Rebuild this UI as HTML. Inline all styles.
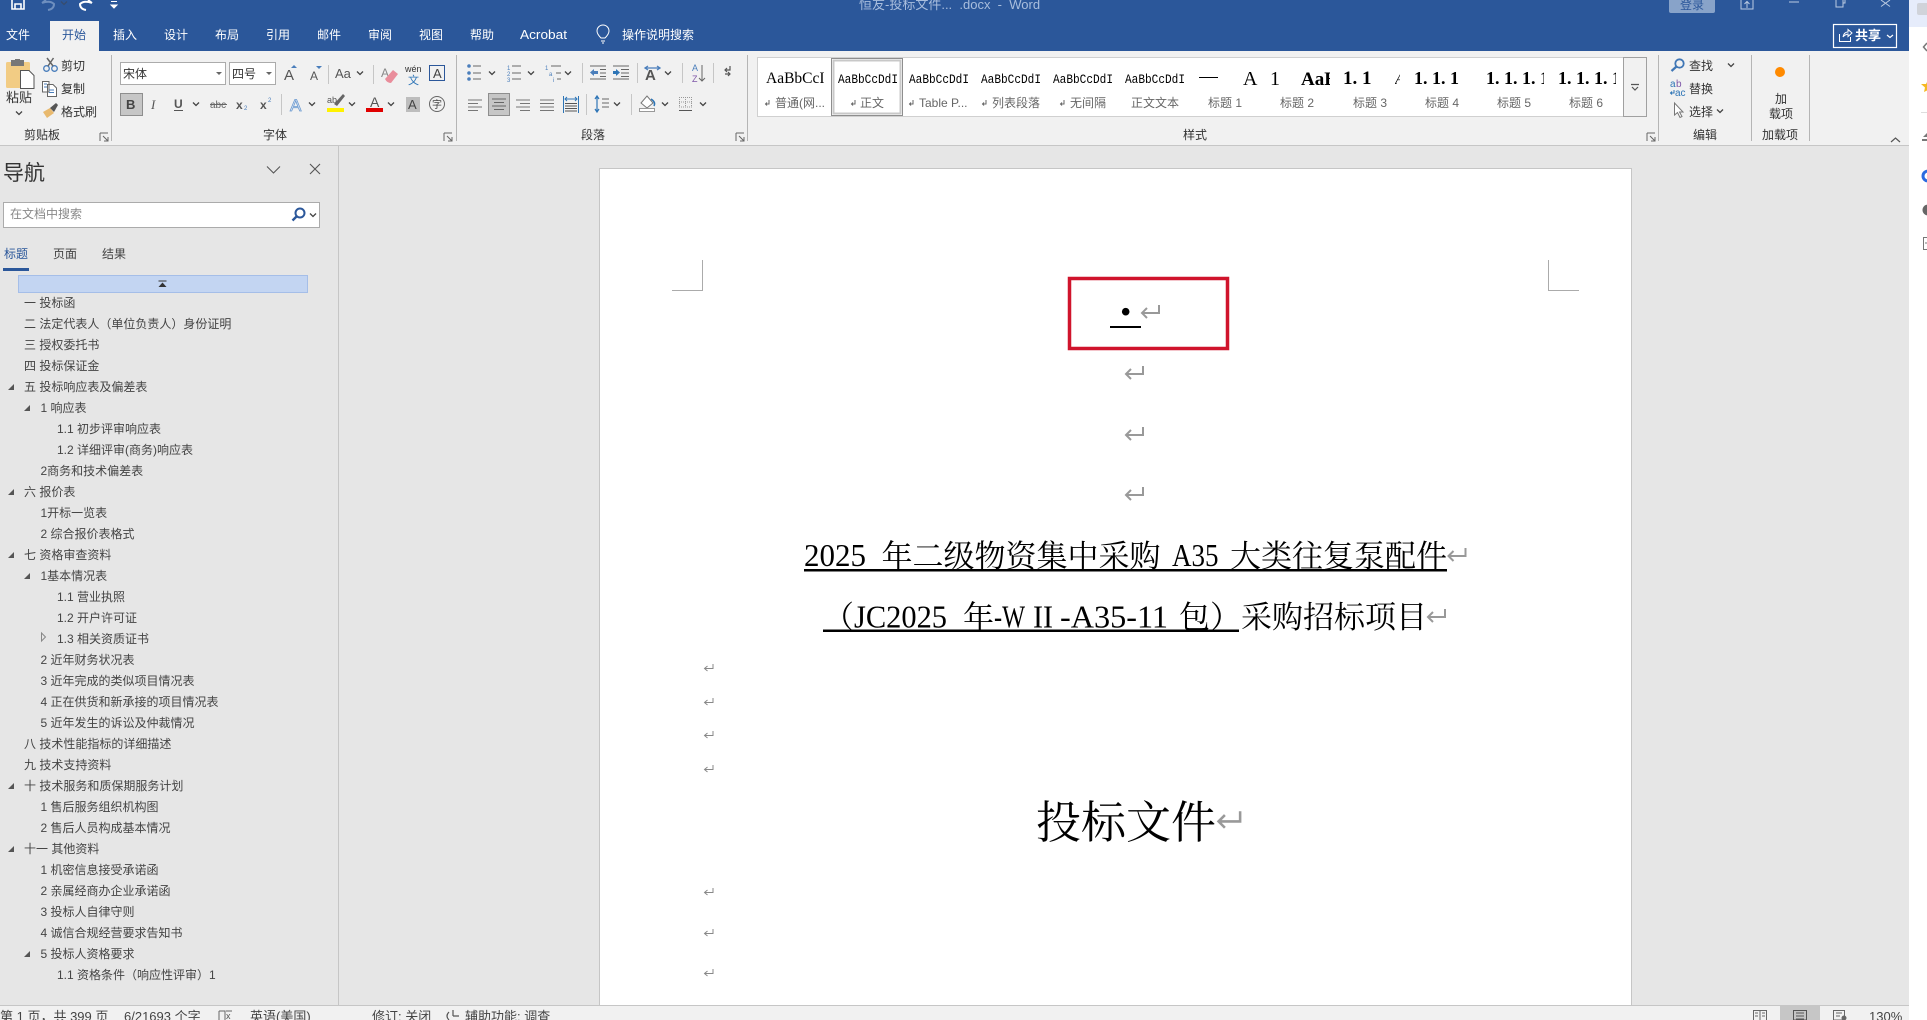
<!DOCTYPE html>
<html lang="zh"><head><meta charset="utf-8"><title>Word</title>
<style>
html,body{margin:0;padding:0;background:#fff;width:1927px;height:1020px;overflow:hidden}
svg{display:block}
text{font-family:"Liberation Sans","Noto Sans CJK SC",sans-serif;font-size:12px;fill:#333;white-space:pre}
.tab{fill:#fff}
.nav{fill:#444}
.lbl{fill:#666}
.ser{font-family:"Liberation Serif","Noto Serif CJK SC",serif;fill:#000}
.mono{font-family:"Liberation Mono",monospace;fill:#000;font-size:13px}
.cj{font-family:"Noto Serif CJK SC","Liberation Serif",serif;fill:#000}
.st{font-size:13px;fill:#444}
</style></head><body>
<svg width="1927" height="1020" viewBox="0 0 1927 1020" xmlns="http://www.w3.org/2000/svg">
<defs>
<path id="ch" d="M-3 -1.500L0 1.500L3 -1.500" fill="none" stroke="#444" stroke-width="1.300"/>
<path id="ln" d="M0 0H8M0 0V8M3 3L8 8M8 4V8H4" fill="none" stroke="#666" stroke-width="1"/>
<path id="ret" d="M19 1V9H2M7 4L2 9L7 14" fill="none" stroke="#999" stroke-width="2"/>
<path id="rets" d="M10 1V5.500H1.500M4.500 3L1.500 5.500L4.500 8" fill="none" stroke="#888" stroke-width="1"/>
<path id="tri" d="M6 0V6H0Z" fill="#555"/>
</defs>

<!-- backgrounds -->
<rect width="1927" height="1020" fill="#E6E6E6"/>
<rect width="1909" height="51" fill="#2B579A"/>
<rect y="51" width="1909" height="94" fill="#F1F1F1"/>
<rect y="145" width="1909" height="1" fill="#C6C6C6"/>
<rect x="338" y="146" width="1" height="859" fill="#C6C6C6"/>

<!-- quick access / title bar -->
<path d="M12 0V9H24V0M15 9V4H21V9" fill="none" stroke="#fff" stroke-width="1.600"/>
<path d="M42 3L46 0M42 3Q50 0 54 4Q54 9 48 10" fill="none" stroke="#6E8FBF" stroke-width="2"/>
<use href="#ch" x="64" y="3" style="opacity:.5"/>
<path d="M92 3L88 0M92 3Q84 0 80 4Q80 9 86 10" fill="none" stroke="#fff" stroke-width="2"/>
<path d="M111 1.500H117M111 5L114 8L117 5Z" fill="#fff" stroke="#fff" stroke-width="1"/>
<text x="859" y="9" style="font-size:13px;fill:#A9BEDD">恒友-投标文件...  .docx  -  Word</text>
<rect x="1669" y="-3" width="46" height="16" rx="2" fill="#88A3C9"/>
<text x="1680" y="9" style="fill:#2B579A;font-size:12px">登录</text>
<path d="M1741 0V9H1753V0M1747 8V2M1744.500 4L1747 1.500L1749.500 4" fill="none" stroke="#BBCBE2" stroke-width="1"/>
<path d="M1789 2H1799" stroke="#BBCBE2" stroke-width="1"/>
<path d="M1836 0V7H1843V0M1839 0V0M1843 3H1845V0" fill="none" stroke="#BBCBE2" stroke-width="1"/>
<path d="M1881 0L1890 6.500M1890 0L1881 6.500" stroke="#BBCBE2" stroke-width="1"/>

<!-- tabs -->
<rect x="50" y="21" width="49" height="30" fill="#F1F1F1"/>
<text class="tab" x="6" y="39">文件</text>
<text x="62" y="39" style="fill:#2B579A">开始</text>
<text class="tab" x="113" y="39">插入</text>
<text class="tab" x="164" y="39">设计</text>
<text class="tab" x="215" y="39">布局</text>
<text class="tab" x="266" y="39">引用</text>
<text class="tab" x="317" y="39">邮件</text>
<text class="tab" x="368" y="39">审阅</text>
<text class="tab" x="419" y="39">视图</text>
<text class="tab" x="470" y="39">帮助</text>
<text class="tab" x="520" y="39" textLength="47" lengthAdjust="spacingAndGlyphs" style="font-size:13px">Acrobat</text>
<path d="M601 38Q597 34 597 31A6 6 0 0 1 609 31Q609 34 605 38ZM601 41H605M602 43H604" fill="none" stroke="#fff" stroke-width="1"/>
<text class="tab" x="622" y="39">操作说明搜索</text>
<rect x="1833.500" y="24.500" width="63" height="23" fill="none" stroke="#fff" stroke-width="1.200"/>
<path d="M1839.500 34V41.500H1850.500V37M1843 37Q1844 32 1848 32V29.500L1852 33L1848 36.500V34Q1845 34.500 1843 37Z" fill="none" stroke="#fff" stroke-width="1"/>
<text x="1855" y="40" style="fill:#fff;font-size:13px;font-weight:bold">共享</text>
<path d="M1887 35L1890 37.500L1893 35" fill="none" stroke="#fff" stroke-width="1.200"/>

<!-- group separators -->
<g fill="#B5B5B5">
<rect x="111" y="55" width="1" height="86"/><rect x="456" y="55" width="1" height="86"/>
<rect x="747" y="55" width="1" height="86"/><rect x="1658" y="55" width="1" height="86"/>
<rect x="1751" y="55" width="1" height="86"/><rect x="1809" y="55" width="1" height="86"/>
</g>

<!-- clipboard -->
<rect x="6" y="62" width="24" height="26" rx="1.500" fill="#F2CC84"/>
<rect x="11" y="60" width="13" height="6" fill="#777"/><rect x="15" y="59" width="5" height="3" fill="#777"/>
<path d="M20.500 70.500H29L34 75.500V88.500H20.500Z" fill="#fff" stroke="#555"/>
<text x="6" y="102" style="font-size:13px">粘贴</text>
<use href="#ch" x="19" y="113"/>
<circle cx="46.500" cy="68.500" r="2.800" fill="none" stroke="#4A7EBB" stroke-width="1.300"/>
<circle cx="54.500" cy="68.500" r="2.800" fill="none" stroke="#4A7EBB" stroke-width="1.300"/>
<path d="M48 66L53.500 58M53 66L47 58" stroke="#666" stroke-width="1.500"/>
<text x="61" y="70" style="font-size:12px">剪切</text>
<path d="M42.500 81.500H49V92H42.500ZM47.500 84.500H53L56.500 88V96.500H47.500Z" fill="#fff" stroke="#666"/>
<path d="M44 84H47M44 87H47M49 90H54M49 92.500H54" stroke="#4A7EBB"/>
<text x="61" y="93" style="font-size:12px">复制</text>
<path d="M43 112L50 108L54 113L47 118Z" fill="#E8B96E"/>
<path d="M50 108L56 103L58 105L54 112Z" fill="#555"/>
<text x="61" y="116" style="font-size:12px">格式刷</text>
<text x="24" y="139">剪贴板</text><use href="#ln" x="100" y="133"/>

<!-- font -->
<rect x="120.500" y="62.500" width="105" height="22" fill="#fff" stroke="#ABABAB"/>
<text x="123" y="78" style="font-size:12px">宋体</text>
<path d="M216 72H222L219 75Z" fill="#666"/>
<rect x="229.500" y="62.500" width="46" height="22" fill="#fff" stroke="#ABABAB"/>
<text x="232" y="78" style="font-size:12px">四号</text>
<path d="M266 72H272L269 75Z" fill="#666"/>
<text x="284" y="80" style="font-size:15px;fill:#555">A</text><path d="M292 66L295 69H289Z" fill="#4A7EBB" transform="translate(2 -1)"/>
<text x="310" y="80" style="font-size:12px;fill:#555">A</text><path d="M316 66H322L319 69Z" fill="#4A7EBB"/>
<rect x="328" y="65" width="1" height="19" fill="#C6C6C6"/>
<text x="335" y="78" style="font-size:13px;fill:#555">Aa</text><use href="#ch" x="360" y="73"/>
<rect x="373" y="65" width="1" height="19" fill="#C6C6C6"/>
<text x="381" y="77" style="font-size:12px;fill:#888">A</text>
<path d="M385 79L393 70L398 74L391 83Q387 83 385 79Z" fill="#E98D9B"/>
<text x="405" y="72" style="font-size:9px;fill:#333">wén</text>
<text x="408" y="84" style="font-size:11px;fill:#2E75B6">文</text>
<rect x="429.500" y="65.500" width="15" height="15" fill="none" stroke="#2B579A"/>
<text x="433" y="78" style="font-size:13px;fill:#444">A</text>

<rect x="120.500" y="93.500" width="22" height="22" fill="#C6C6C6" stroke="#8E8E8E"/>
<text x="126" y="109" style="font-size:13px;font-weight:bold;fill:#444">B</text>
<text x="151" y="109" style="font-family:'Liberation Serif',serif;font-size:13px;font-style:italic;fill:#555">I</text>
<text x="174" y="108" style="font-size:12px;font-weight:bold;fill:#555">U</text><rect x="174" y="110" width="9" height="1" fill="#555"/>
<use href="#ch" x="196" y="104"/>
<text x="210" y="108" style="font-size:10px;fill:#666">abc</text><rect x="210" y="104" width="17" height="1" fill="#666"/>
<text x="236" y="109" style="font-size:12px;font-weight:bold;fill:#555">x</text><text x="244" y="110" style="font-size:6px;fill:#4A7EBB">2</text>
<text x="260" y="109" style="font-size:12px;font-weight:bold;fill:#555">x</text><text x="268" y="102" style="font-size:6px;fill:#4A7EBB">2</text>
<rect x="281" y="94" width="1" height="21" fill="#C6C6C6"/>
<text x="290" y="111" style="font-size:17px;fill:#E4EDF7;stroke:#6C9AD0;stroke-width:.8">A</text><use href="#ch" x="312" y="104"/>
<text x="327" y="103" style="font-size:9px;fill:#555">ab</text>
<path d="M334 104L343 94L345 96L337 106Z" fill="#666"/>
<rect x="327" y="108" width="17" height="4" fill="#FFF200"/><use href="#ch" x="352" y="104"/>
<text x="370" y="107" style="font-size:14px;fill:#555">A</text><rect x="366" y="108" width="17" height="4" fill="#E00000"/><use href="#ch" x="391" y="104"/>
<rect x="406" y="97" width="14" height="15" fill="#BDBDBD"/><text x="408" y="109" style="font-size:13px;fill:#444">A</text>
<circle cx="437" cy="104" r="7.500" fill="none" stroke="#666"/><text x="432" y="108" style="font-size:10px;fill:#444">字</text>
<text x="263" y="139">字体</text><use href="#ln" x="444" y="133"/>

<!-- paragraph row 1 -->
<g fill="#4A7EBB"><circle cx="469" cy="66" r="1.800"/><circle cx="469" cy="73" r="1.800"/><circle cx="469" cy="79" r="1.800"/></g>
<path d="M473 66H481M473 73H481M473 79H481" stroke="#666" stroke-width="1"/><use href="#ch" x="492" y="73"/>
<text x="507" y="70" style="font-size:6px;fill:#4A7EBB">1</text><text x="507" y="76" style="font-size:6px;fill:#4A7EBB">2</text><text x="507" y="82" style="font-size:6px;fill:#4A7EBB">3</text>
<path d="M512 66H521M512 73H521M512 79H521" stroke="#666" stroke-width="1"/><use href="#ch" x="531" y="73"/>
<text x="545" y="70" style="font-size:6px;fill:#4A7EBB">1</text><text x="549" y="76" style="font-size:6px;fill:#4A7EBB">a</text><text x="553" y="82" style="font-size:6px;fill:#4A7EBB">i</text>
<path d="M551 66H561M556 73H561M557 79H561" stroke="#666" stroke-width="1"/><use href="#ch" x="568" y="73"/>
<rect x="582" y="63" width="1" height="20" fill="#C6C6C6"/>
<path d="M590 66H606M600 69.500H606M600 73H606M600 76.500H606M590 79H606" stroke="#666" fill="none"/>
<path d="M590 72.500L594 69V71H598V74H594V76Z" fill="#4A7EBB"/>
<path d="M613 66H629M621 69.500H629M621 73H629M621 76.500H629M613 79H629" stroke="#666" fill="none"/>
<path d="M620 72.500L616 69V71H613V74H616V76Z" fill="#2E75B6"/>
<rect x="637" y="63" width="1" height="20" fill="#C6C6C6"/>
<text x="645" y="80" style="font-size:15px;font-weight:bold;fill:#555">A</text>
<path d="M645 68H660M648 66L645 68L648 70M657 66L660 68L657 70" fill="none" stroke="#4A7EBB" stroke-width="1.300"/><use href="#ch" x="668" y="73"/>
<rect x="682" y="63" width="1" height="20" fill="#C6C6C6"/>
<text x="692" y="71" style="font-size:9px;fill:#4A7EBB">A</text><text x="692" y="82" style="font-size:9px;fill:#7E57A8">Z</text>
<path d="M702 65V81M699 78L702 81L705 78" fill="none" stroke="#666"/>
<rect x="713" y="63" width="1" height="20" fill="#C6C6C6"/>
<path d="M730 66V70H725M727 68L725 70L727 72M725 74H730M728 72L730 74L728 76" fill="none" stroke="#555" stroke-width="1.200"/>

<!-- paragraph row 2 -->
<path d="M468 100H482M468 103.500H478M468 107H482M468 110.500H478" stroke="#777"/>
<rect x="488.500" y="93.500" width="21" height="22" fill="#C6C6C6" stroke="#8E8E8E"/>
<path d="M492 99H506M494 102.500H504M492 106H506M494 109.500H504" stroke="#666"/>
<path d="M516 100H530M520 103.500H530M516 107H530M520 110.500H530" stroke="#777"/>
<path d="M540 100H554M540 103.500H554M540 107H554M540 110.500H554" stroke="#777"/>
<path d="M563.500 96V113M578.500 96V113" stroke="#2E75B6"/><path d="M565 99H577M567 97L565 99L567 101M575 97L577 99L575 101" fill="none" stroke="#2E75B6"/>
<path d="M565 103.500H577M565 106H577M565 108.500H577M565 111H577" stroke="#555"/>
<rect x="586" y="94" width="1" height="21" fill="#C6C6C6"/>
<path d="M597 96V112M595 99L597 96L599 99M595 109L597 112L599 109" fill="none" stroke="#2E75B6" stroke-width="1.200"/>
<path d="M602 99H609M602 103H609M602 107H609" stroke="#666"/><use href="#ch" x="617" y="104"/>
<rect x="631" y="94" width="1" height="21" fill="#C6C6C6"/>
<path d="M641 103L647 96L653 103L647 108Z" fill="#fff" stroke="#777"/><path d="M651 99Q656 102 654 106" fill="none" stroke="#2E75B6" stroke-width="1.500"/>
<rect x="639.500" y="108.500" width="15" height="3" fill="#fff" stroke="#999"/><use href="#ch" x="665" y="104"/>
<path d="M679 97.500H692M679 102H692M679 107H692M685.500 97V107M679.500 97V107M691.500 97V107" stroke="#999" stroke-dasharray="1 1"/><path d="M679 110.500H692" stroke="#555"/><use href="#ch" x="703" y="104"/>
<text x="581" y="139">段落</text><use href="#ln" x="736" y="133"/>

<!-- styles gallery -->
<rect x="757.500" y="57.500" width="866" height="59" fill="#fff" stroke="#D0D0D0"/>
<rect x="831.500" y="58.500" width="71" height="57" fill="#fff" stroke="#8E8E8E"/>
<rect x="833.500" y="60.500" width="67" height="53" fill="none" stroke="#C8C8C8" stroke-width="2"/>
<rect x="1623.500" y="57.500" width="23" height="59" fill="#F1F1F1" stroke="#A0A0A0"/>
<path d="M1631 84.500H1639M1632 87L1635 90L1638 87" fill="none" stroke="#555" stroke-width="1.200"/>

<svg x="766" y="65" width="60" height="26"><text class="ser" x="0" y="18" style="font-size:15.500px">AaBbCcI</text></svg>
<svg x="838" y="65" width="59" height="26"><text class="mono" x="0" y="18" textLength="60" lengthAdjust="spacingAndGlyphs">AaBbCcDdI</text></svg>
<svg x="909" y="65" width="60" height="26"><text class="mono" x="0" y="18" textLength="60" lengthAdjust="spacingAndGlyphs">AaBbCcDdI</text></svg>
<svg x="981" y="65" width="60" height="26"><text class="mono" x="0" y="18" textLength="60" lengthAdjust="spacingAndGlyphs">AaBbCcDdI</text></svg>
<svg x="1053" y="65" width="59" height="26"><text class="mono" x="0" y="18" textLength="60" lengthAdjust="spacingAndGlyphs">AaBbCcDdI</text></svg>
<svg x="1125" y="65" width="59" height="26"><text class="mono" x="0" y="18" textLength="60" lengthAdjust="spacingAndGlyphs">AaBbCcDdI</text></svg>
<rect x="1199" y="77" width="19" height="1" fill="#000"/>
<text class="ser" x="1243" y="85" style="font-size:20px">A</text>
<text class="ser" x="1270" y="85" style="font-size:20px">1</text>
<svg x="1301" y="62" width="29" height="30"><text class="ser" x="0" y="23" style="font-size:19px;font-weight:bold">AaB</text></svg>
<text class="ser" x="1343" y="84" style="font-size:19px;font-weight:bold">1. 1</text>
<svg x="1395" y="62" width="5" height="30"><text class="ser" x="0" y="22" style="font-size:16px;font-style:italic">A</text></svg>
<text class="ser" x="1414" y="84" style="font-size:18px;font-weight:bold">1. 1. 1</text>
<svg x="1486" y="62" width="58" height="30"><text class="ser" x="0" y="22" style="font-size:18px;font-weight:bold">1. 1. 1. 1</text></svg>
<svg x="1558" y="62" width="58" height="30"><text class="ser" x="0" y="22" style="font-size:18px;font-weight:bold">1. 1. 1. 1</text></svg>

<g fill="none" stroke="#666" stroke-width="1">
<path d="M769 100V104H765.500M767 102.500L765.500 104L767 105.500"/>
<path d="M855 100V104H851.500M853 102.500L851.500 104L853 105.500"/>
<path d="M913 100V104H909.500M911 102.500L909.500 104L911 105.500"/>
<path d="M986 100V104H982.500M984 102.500L982.500 104L984 105.500"/>
<path d="M1064 100V104H1060.500M1062 102.500L1060.500 104L1062 105.500"/>
</g>
<text class="lbl" x="775" y="107">普通(网...</text>
<text class="lbl" x="860" y="107">正文</text>
<text class="lbl" x="919" y="107">Table P...</text>
<text class="lbl" x="992" y="107">列表段落</text>
<text class="lbl" x="1070" y="107">无间隔</text>
<text class="lbl" x="1131" y="107">正文文本</text>
<text class="lbl" x="1208" y="107">标题 1</text>
<text class="lbl" x="1280" y="107">标题 2</text>
<text class="lbl" x="1353" y="107">标题 3</text>
<text class="lbl" x="1425" y="107">标题 4</text>
<text class="lbl" x="1497" y="107">标题 5</text>
<text class="lbl" x="1569" y="107">标题 6</text>
<text x="1183" y="139">样式</text><use href="#ln" x="1647" y="133"/>

<!-- editing -->
<circle cx="1679.500" cy="63.500" r="4.200" fill="none" stroke="#3F76B5" stroke-width="1.800"/>
<path d="M1676.500 66.500L1671.500 71" stroke="#3F76B5" stroke-width="2.200"/>
<text x="1689" y="70">查找</text><use href="#ch" x="1731" y="65"/>
<text x="1670" y="87" style="font-size:10px;fill:#2E75B6">a</text><text x="1676" y="87" style="font-size:10px;fill:#7E57A8">b</text>
<text x="1675" y="96" style="font-size:10px;fill:#2E75B6">ac</text>
<path d="M1674 90V93H1670.500M1672 91.500L1670.500 93L1672 94.500" fill="none" stroke="#2E75B6"/>
<text x="1689" y="93">替换</text>
<path d="M1674.500 103V115L1677.500 112.500L1680 117.500L1682 116.500L1679.500 112H1683Z" fill="#fff" stroke="#777"/>
<text x="1689" y="116">选择</text><use href="#ch" x="1720" y="111"/>
<text x="1693" y="139">编辑</text>

<!-- add-ins -->
<circle cx="1780" cy="72" r="5" fill="#FF8A00"/>
<text x="1775" y="103">加</text>
<text x="1769" y="118">载项</text>
<text x="1762" y="139">加载项</text>
<path d="M1891 142L1895.500 138L1900 142" fill="none" stroke="#555" stroke-width="1.200"/>

<!-- navigation pane -->
<text x="3" y="180" style="font-size:21px;fill:#333">导航</text>
<path d="M267 166.500L273.500 173L280 166.500" fill="none" stroke="#555" stroke-width="1.100"/>
<path d="M310 164L320 174M320 164L310 174" stroke="#555" stroke-width="1.100"/>
<rect x="3.500" y="202.500" width="316" height="25" fill="#fff" stroke="#ABABAB"/>
<text x="10" y="218" style="fill:#888">在文档中搜索</text>
<circle cx="300" cy="213" r="4.500" fill="none" stroke="#2B579A" stroke-width="2"/>
<path d="M296.500 216.500L292.500 220.500" stroke="#2B579A" stroke-width="2.400"/>
<use href="#ch" x="313" y="215"/>
<text x="4" y="258" style="fill:#2B579A">标题</text><rect x="3" y="268" width="26" height="3" fill="#2B579A"/>
<text x="53" y="258" style="fill:#444">页面</text>
<text x="102" y="258" style="fill:#444">结果</text>
<rect x="18.500" y="275.500" width="289" height="17" fill="#C3D5F2" stroke="#A5BEE8"/>
<path d="M158.500 281H166.500" stroke="#333" stroke-width="1"/><path d="M158.500 287L162.500 282.500L166.500 287Z" fill="#333"/>

<text class="nav" x="24" y="307">一 投标函</text>
<text class="nav" x="24" y="328">二 法定代表人（单位负责人）身份证明</text>
<text class="nav" x="24" y="349">三 授权委托书</text>
<text class="nav" x="24" y="370">四 投标保证金</text>
<use href="#tri" x="8" y="384"/><text class="nav" x="24" y="391">五 投标响应表及偏差表</text>
<use href="#tri" x="24" y="405"/><text class="nav" x="40.500" y="412">1 响应表</text>
<text class="nav" x="57" y="433">1.1 初步评审响应表</text>
<text class="nav" x="57" y="454">1.2 详细评审(商务)响应表</text>
<text class="nav" x="40.500" y="475">2商务和技术偏差表</text>
<use href="#tri" x="8" y="489"/><text class="nav" x="24" y="496">六 报价表</text>
<text class="nav" x="40.500" y="517">1开标一览表</text>
<text class="nav" x="40.500" y="538">2 综合报价表格式</text>
<use href="#tri" x="8" y="552"/><text class="nav" x="24" y="559">七 资格审查资料</text>
<use href="#tri" x="24" y="573"/><text class="nav" x="40.500" y="580">1基本情况表</text>
<text class="nav" x="57" y="601">1.1 营业执照</text>
<text class="nav" x="57" y="622">1.2 开户许可证</text>
<path d="M41.500 633V641L45.500 637Z" fill="none" stroke="#888"/><text class="nav" x="57" y="643">1.3 相关资质证书</text>
<text class="nav" x="40.500" y="664">2 近年财务状况表</text>
<text class="nav" x="40.500" y="685">3 近年完成的类似项目情况表</text>
<text class="nav" x="40.500" y="706">4 正在供货和新承接的项目情况表</text>
<text class="nav" x="40.500" y="727">5 近年发生的诉讼及仲裁情况</text>
<text class="nav" x="24" y="748">八 技术性能指标的详细描述</text>
<text class="nav" x="24" y="769">九 技术支持资料</text>
<use href="#tri" x="8" y="783"/><text class="nav" x="24" y="790">十 技术服务和质保期服务计划</text>
<text class="nav" x="40.500" y="811">1 售后服务组织机构图</text>
<text class="nav" x="40.500" y="832">2 售后人员构成基本情况</text>
<use href="#tri" x="8" y="846"/><text class="nav" x="24" y="853">十一 其他资料</text>
<text class="nav" x="40.500" y="874">1 机密信息接受承诺函</text>
<text class="nav" x="40.500" y="895">2 亲属经商办企业承诺函</text>
<text class="nav" x="40.500" y="916">3 投标人自律守则</text>
<text class="nav" x="40.500" y="937">4 诚信合规经营要求告知书</text>
<use href="#tri" x="24" y="951"/><text class="nav" x="40.500" y="958">5 投标人资格要求</text>
<text class="nav" x="57" y="979">1.1 资格条件（响应性评审）1</text>

<!-- page -->
<rect x="599.500" y="168.500" width="1032" height="838" fill="#fff" stroke="#C6C6C6"/>
<path d="M702.500 260V290.500H672M1548.500 260V290.500H1579" fill="none" stroke="#ABABAB"/>
<rect x="1069.500" y="278.500" width="158" height="70" fill="none" stroke="#D0142C" stroke-width="3.500"/>
<circle cx="1125.700" cy="311.700" r="3.800" fill="#000"/>
<rect x="1110" y="326" width="31" height="2" fill="#000"/>
<use href="#ret" x="1140" y="304"/>
<use href="#ret" x="1124" y="365"/>
<use href="#ret" x="1124" y="426"/>
<use href="#ret" x="1124" y="486"/>

<!-- title line 1 -->
<text class="ser" x="804" y="566" style="font-size:32px" textLength="62" lengthAdjust="spacingAndGlyphs">2025</text>
<text class="cj" x="881.500" y="567" style="font-size:31px">年二级物资集中采购</text>
<text class="ser" x="1172" y="566" style="font-size:32px" textLength="46.500" lengthAdjust="spacingAndGlyphs">A35</text>
<text class="cj" x="1230" y="567" style="font-size:31px">大类往复泵配件</text>
<rect x="804" y="569" width="643" height="2.500" fill="#000"/>
<use href="#ret" x="1446.500" y="547"/>

<!-- title line 2 -->
<text class="cj" x="823" y="628" style="font-size:31px">（</text>
<text class="ser" x="854" y="627.500" style="font-size:32px" textLength="93" lengthAdjust="spacingAndGlyphs">JC2025</text>
<text class="cj" x="963" y="628" style="font-size:31px">年</text>
<text class="ser" x="994" y="627.500" style="font-size:32px" textLength="31" lengthAdjust="spacingAndGlyphs">-W</text>
<text class="ser" x="1033" y="627.500" style="font-size:32px" textLength="20" lengthAdjust="spacingAndGlyphs">II</text>
<text class="ser" x="1060" y="627.500" style="font-size:32px" textLength="108" lengthAdjust="spacingAndGlyphs">-A35-11</text>
<text class="cj" x="1179" y="628" style="font-size:31px">包）</text>
<text class="cj" x="1241" y="628" style="font-size:31px">采购招标项目</text>
<rect x="823" y="629.500" width="416" height="2.500" fill="#000"/>
<use href="#ret" x="1426" y="608"/>

<use href="#rets" x="703" y="663"/>
<use href="#rets" x="703" y="697"/>
<use href="#rets" x="703" y="730"/>
<use href="#rets" x="703" y="764"/>

<text class="cj" x="1036" y="838" style="font-size:45px">投标文件</text>
<g transform="translate(1216 810) scale(1.270)"><use href="#ret"/></g>

<use href="#rets" x="703" y="887"/>
<use href="#rets" x="703" y="928"/>
<use href="#rets" x="703" y="968"/>

<!-- status bar -->
<rect y="1005" width="1909" height="15" fill="#F1F1F1"/>
<rect y="1005" width="1909" height="1" fill="#C6C6C6"/>
<text class="st" x="0" y="1021">第 1 页，共 399 页</text>
<text class="st" x="124" y="1021">6/21693 个字</text>
<path d="M219 1011V1020M219 1011H225V1020M226 1011H232" fill="none" stroke="#666"/><text x="226" y="1019" style="font-size:9px;fill:#555">x</text>
<text class="st" x="250" y="1021">英语(美国)</text>
<text class="st" x="372" y="1021">修订: 关闭</text>
<path d="M449 1012Q445 1016 449 1020M453 1010V1016M453 1016H459" fill="none" stroke="#555" stroke-width="1.200"/>
<text class="st" x="465" y="1021">辅助功能: 调查</text>
<path d="M1753.500 1010V1020M1766.500 1010V1020M1753 1010.500H1766M1760 1010V1020M1755 1013H1758M1755 1016H1758M1762 1013H1765M1762 1016H1765" fill="none" stroke="#666"/>
<rect x="1780" y="1006" width="40" height="14" fill="#C6C6C6"/>
<path d="M1793.500 1010.500H1806.500V1020H1793.500ZM1796 1013H1804M1796 1016H1804M1796 1019H1804" fill="none" stroke="#555"/>
<path d="M1833.500 1010.500H1844.500V1020H1833.500ZM1836 1013H1842M1836 1016H1840" fill="none" stroke="#666"/><circle cx="1844" cy="1018" r="2.500" fill="#666"/>
<text class="st" x="1869" y="1021">130%</text>

<!-- right strip -->
<rect x="1909" width="18" height="1020" fill="#fff"/>
<rect x="1909" width="18" height="27" fill="#E6ECFB"/>
<rect x="1917" y="3" width="12" height="12" rx="2" fill="#D0D3DA"/>
<path d="M1927 43L1923.500 47L1927 51" fill="none" stroke="#777" stroke-width="1.500"/>
<path d="M1928 80L1926 84H1921L1925 87.500L1924 92L1928 90Z" fill="#F5B823"/>
<rect x="1921" y="112" width="6" height="1" fill="#DDD"/>
<path d="M1923 137L1927 133V137ZM1922 139H1927V141H1922Z" fill="#777"/>
<circle cx="1928" cy="176" r="5" fill="none" stroke="#2B6BE0" stroke-width="3"/>
<circle cx="1928" cy="210" r="5.500" fill="#666"/>
<path d="M1927 237.500H1923.500V249.500H1927M1925 243H1927" fill="none" stroke="#777"/>
</svg>
</body></html>
